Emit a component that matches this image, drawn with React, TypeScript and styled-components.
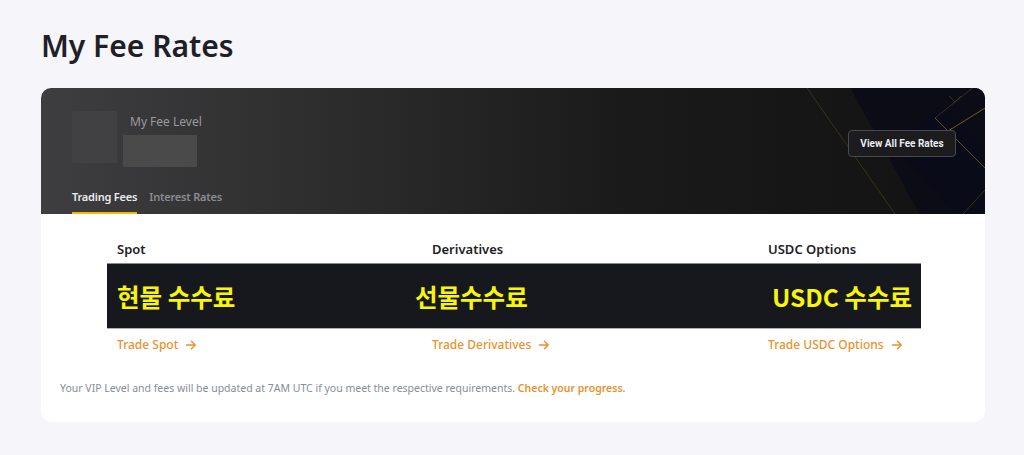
import { FC } from "react";
import styled, { createGlobalStyle } from "styled-components";

const GlobalStyle = createGlobalStyle`
  body {
    margin: 0;
    background-color: #f5f5fa;
    font-family: "Noto Sans", "Noto Sans CJK KR", sans-serif;
  }
`;

const columns = [
  { title: "Spot", fee: "현물 수수료", link: "Trade Spot" },
  { title: "Derivatives", fee: "선물수수료", link: "Trade Derivatives" },
  { title: "USDC Options", fee: "USDC 수수료", link: "Trade USDC Options" },
];

const ArrowIcon: FC = () => (
  <svg width="12" height="12" viewBox="0 0 12 12" fill="none">
    <path d="M1.5 6h8.5M6.5 2.2L10.2 6 6.5 9.8" stroke="currentColor" strokeWidth="1.4" strokeLinecap="round" strokeLinejoin="round" />
  </svg>
);

const Decoration: FC = () => (
  <DecoSvg width="200" height="126" viewBox="0 0 200 126" fill="none">
    <path d="M60 -10 L210 -10 L210 136 L140 136 Z" fill="#0b0c15" />
    <path d="M112 60 L150 22 Q156 16 162 22 L210 70 L210 136 L180 136 Z" fill="#0a0b18" />
    <path d="M22 0 L110 126" stroke="#5a4a1e" strokeWidth="0.8" opacity="0.7" />
    <path d="M150 30 L200 -10" stroke="#6a5420" strokeWidth="0.8" opacity="0.6" />
    <path d="M150 30 L200 80" stroke="#c89a2a" strokeWidth="1" opacity="0.5" />
    <path d="M160 45 L200 20" stroke="#c89a2a" strokeWidth="1" opacity="0.55" />
    <path d="M178 126 L200 102" stroke="#8a6a20" strokeWidth="0.8" opacity="0.5" />
    <path d="M164 8 L170 14 L176 8" stroke="#6a5420" strokeWidth="0.8" opacity="0.6" />
  </DecoSvg>
);

const App: FC = () => {
  return (
    <>
      <GlobalStyle />
      <Page>
        <Title>My Fee Rates</Title>
        <Card>
          <Header>
            <Decoration />
            <LevelRow>
              <Avatar />
              <LevelInfo>
                <LevelLabel>My Fee Level</LevelLabel>
                <LevelValue />
              </LevelInfo>
              <ViewButton>View All Fee Rates</ViewButton>
            </LevelRow>
            <Tabs>
              <Tab $active>Trading Fees</Tab>
              <Tab>Interest Rates</Tab>
            </Tabs>
          </Header>
          <Body>
            <ColumnRow>
              {columns.map((c) => (
                <ColumnTitle key={c.title}>{c.title}</ColumnTitle>
              ))}
            </ColumnRow>
            <FeeBar>
              {columns.map((c) => (
                <FeeText key={c.fee}>{c.fee}</FeeText>
              ))}
            </FeeBar>
            <ColumnRow>
              {columns.map((c) => (
                <TradeLink key={c.link}>
                  {c.link}
                  <ArrowIcon />
                </TradeLink>
              ))}
            </ColumnRow>
          </Body>
          <Note>
            Your VIP Level and fees will be updated at 7AM UTC if you meet the respective requirements.{" "}
            <NoteLink>Check your progress.</NoteLink>
          </Note>
        </Card>
      </Page>
    </>
  );
};

const Page = styled.div`
  padding: 26px 39px 34px 41px;
`;

const Title = styled.h1`
  margin: 0 0 22px;
  font-size: 30px;
  line-height: 40px;
  font-weight: 600;
  color: #1e2026;
`;

const Card = styled.div`
  background-color: #fff;
  border-radius: 10px;
  overflow: hidden;
  padding-bottom: 26px;
`;

const Header = styled.div`
  position: relative;
  height: 126px;
  box-sizing: border-box;
  padding: 23px 29px 0 31px;
  background: linear-gradient(90deg, #3e3e40 0%, #2d2d2e 30%, #1a1a1a 62%, #121212 100%);
  display: flex;
  flex-direction: column;
  justify-content: space-between;
`;

const DecoSvg = styled.svg`
  position: absolute;
  right: 0;
  top: 0;
`;

const LevelRow = styled.div`
  position: relative;
  display: flex;
  align-items: flex-start;
`;

const Avatar = styled.div`
  width: 45px;
  height: 52px;
  background-color: #414143;
  border-radius: 2px;
  filter: blur(0.6px);
`;

const LevelInfo = styled.div`
  display: flex;
  flex-direction: column;
  margin-left: 6px;
  padding-top: 3px;
`;

const LevelLabel = styled.div`
  margin-left: 7px;
  font-size: 12px;
  line-height: 16px;
  color: #9a9a9c;
`;

const LevelValue = styled.div`
  margin-top: 5px;
  width: 74px;
  height: 32px;
  background-color: #4a4a4b;
  filter: blur(0.6px);
`;

const ViewButton = styled.button`
  margin-left: auto;
  margin-top: 19px;
  width: 108px;
  height: 27px;
  border: 1px solid #48494c;
  border-radius: 4px;
  background-color: #1c1c1e;
  color: #eaecef;
  font-family: Roboto, "Noto Sans", sans-serif;
  font-size: 10px;
  font-weight: 700;
  cursor: pointer;
`;

const Tabs = styled.div`
  position: relative;
  display: flex;
  gap: 12px;
`;

const Tab = styled.div<{ $active?: boolean }>`
  padding-bottom: 7px;
  font-size: 11px;
  line-height: 16px;
  font-weight: 600;
  letter-spacing: -0.2px;
  color: ${({ $active }) => ($active ? "#eaecef" : "#8b8c8f")};
  border-bottom: 2px solid ${({ $active }) => ($active ? "#f0b90b" : "transparent")};
`;

const Body = styled.div`
  padding: 26px 64px 0 66px;
`;

const ColumnRow = styled.div`
  display: grid;
  grid-template-columns: 315px 336px 1fr;
`;

const ColumnTitle = styled.div`
  padding-left: 10px;
  font-size: 13px;
  line-height: 18px;
  font-weight: 600;
  color: #1e2026;
`;

const FeeBar = styled.div`
  display: grid;
  grid-template-columns: 298px 1fr auto;
  align-items: center;
  height: 66px;
  box-sizing: border-box;
  margin: 5px 0 7px;
  padding: 0 9px 0 10px;
  background-color: #17181d;
  border-top: 1px solid #8a8a8a;
  border-bottom: 1px solid #b0b0b0;
`;

const FeeText = styled.div`
  white-space: nowrap;
  font-family: "Noto Sans CJK KR", "Noto Sans", sans-serif;
  font-size: 24.5px;
  font-weight: 700;
  color: #f7f50a;
`;

const TradeLink = styled.a`
  display: flex;
  align-items: center;
  gap: 7px;
  padding-left: 10px;
  font-size: 12px;
  line-height: 18px;
  font-weight: 500;
  color: #e8922d;
  cursor: pointer;
`;

const Note = styled.p`
  margin: 26px 0 0;
  padding-left: 19px;
  font-size: 10.5px;
  line-height: 16px;
  color: #848e9c;
`;

const NoteLink = styled.span`
  color: #e8922d;
  font-weight: 600;
  cursor: pointer;
`;

export default App;
